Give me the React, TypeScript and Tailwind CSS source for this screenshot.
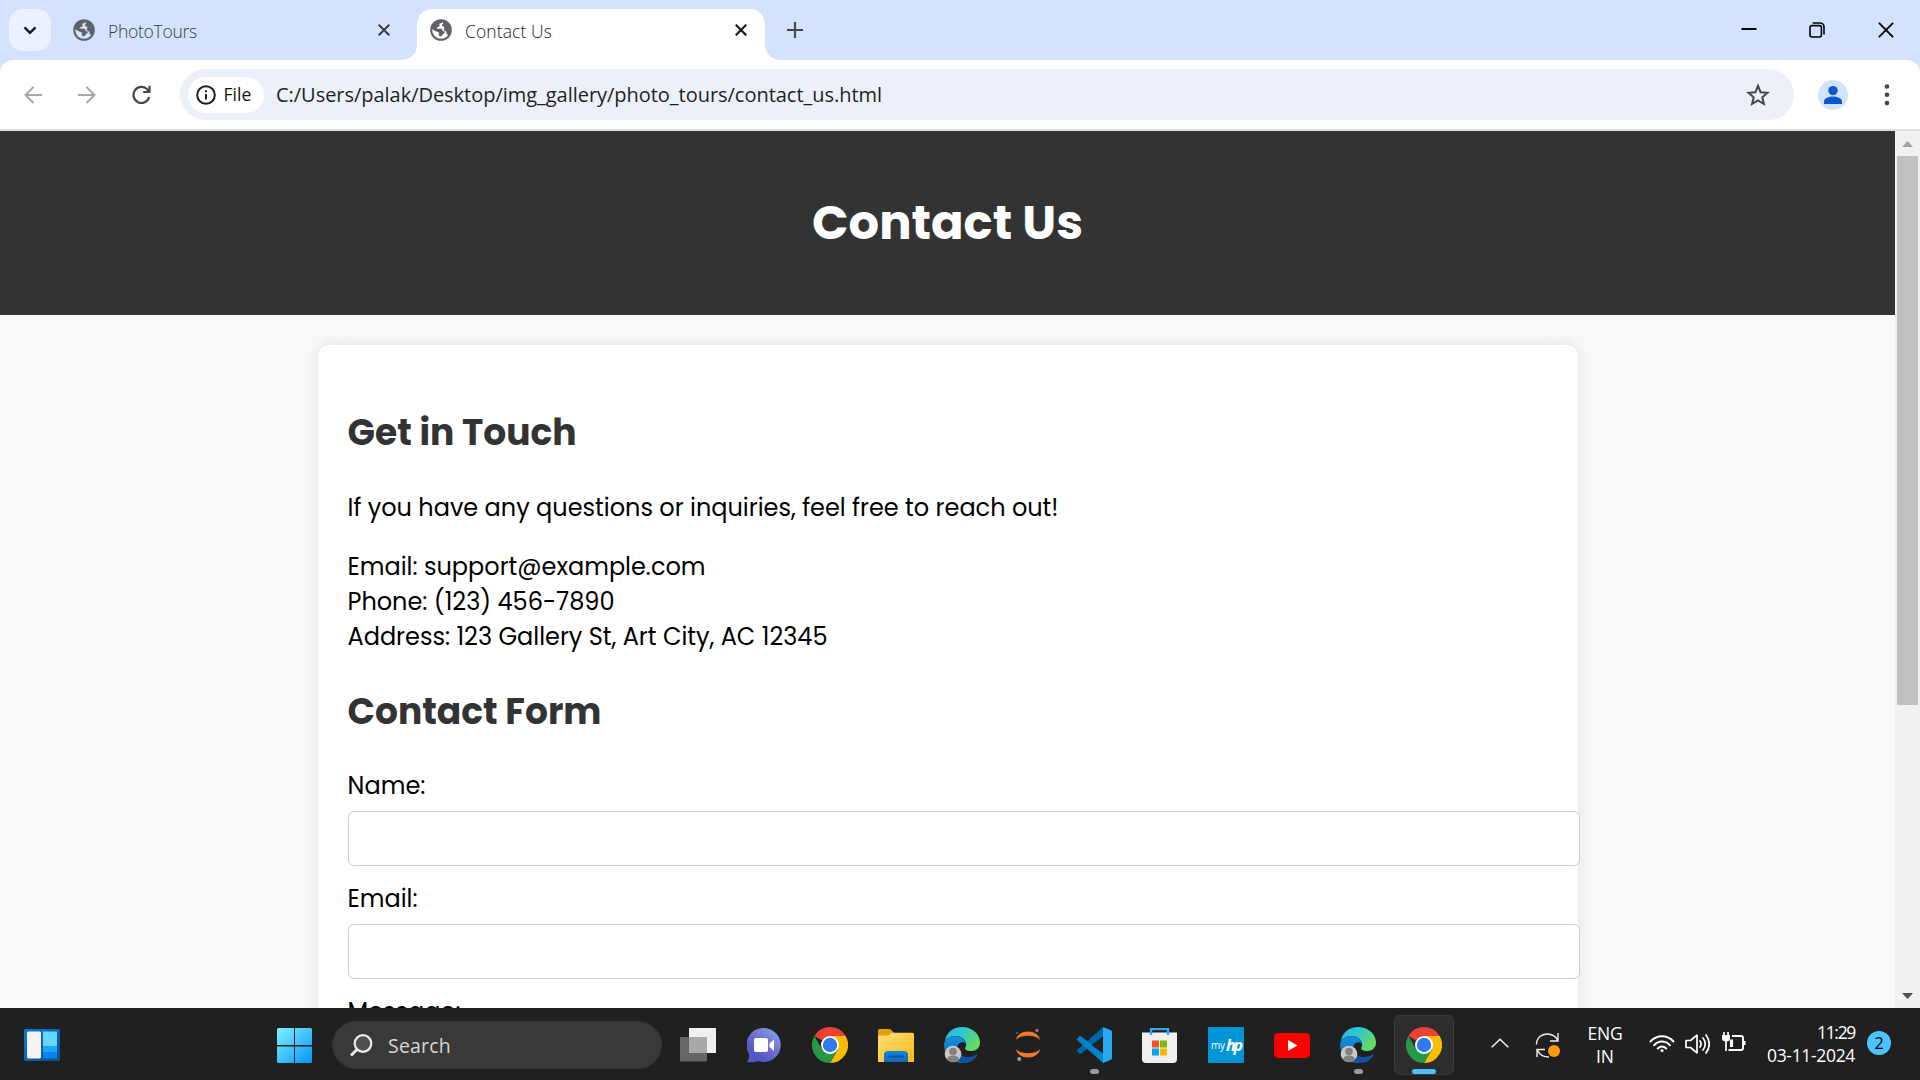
import { useLayoutEffect, useRef, useState, type ReactNode } from "react";

const UI = "font-['Segoe_UI','Open_Sans',sans-serif]";
const PAGE = "font-['Poppins','Inter',sans-serif]";

/** Single-line text whose tracking is adjusted so that it spans the given width. */
function Fit({ w, children, className = "" }: { w: number; children: string; className?: string }) {
  const ref = useRef<HTMLSpanElement>(null);
  const [spacing, setSpacing] = useState(0);
  useLayoutEffect(() => {
    if (!ref.current) return;
    ref.current.style.letterSpacing = "0px";
    const natural = ref.current.getBoundingClientRect().width;
    const next = (w - natural) / children.length;
    ref.current.style.letterSpacing = `${next}px`;
    setSpacing(next);
  }, [w, children]);
  return (
    <span ref={ref} className={`inline-block whitespace-nowrap ${className}`} style={{ letterSpacing: spacing }}>
      {children}
    </span>
  );
}

function Globe() {
  return (
    <svg width="22" height="22" viewBox="0 0 22 22" className="shrink-0">
      <circle cx="11" cy="11" r="9.8" fill="none" stroke="#5f6368" strokeWidth="2" />
      <path
        d="M1.5 9.5C2.5 4.5 6.5 1.2 11.3 1.2l1.7.3-.6 2.3c-1 .7-2.6.3-3 1.3-.3.9.7 1.7-.1 2.4-.8.6-2.1.2-2.5 1.1-.2.8.6 1.2 1.6 1.2h2.8c1.1 0 1.4 1.2 1.5 2.2.8.3 1.9.1 2.1 1.1.2 1-.9 1.5-1.7 1.9-.8.5-.6 1.6-1.5 2.1-1 .5-2.5.1-2.7-1-.2-1.2.2-2.3-.8-3-1.1-.6-2.5-.7-3.600-1.3z"
        fill="#5f6368"
      />
      <path
        d="M13 1.5c4.5.9 7.6 4.9 7.6 9.500 0 2.400-.8 4.600-2.200 6.300-.1-1-.7-1.600-1.500-2-.7-.5-.2-1.900-.7-2.700-.6-.9-2-.7-2.300-1.700-.3-1.100.7-2 .2-3-.4-.8-1.800-.4-2.100-1.300-.3-.9.8-1.300 1-2.200z"
        fill="#5f6368"
      />
    </svg>
  );
}

function Cross({ color, size = 12, sw = 2 }: { color: string; size?: number; sw?: number }) {
  return (
    <svg width={size} height={size} viewBox="0 0 12 12" fill="none" stroke={color} strokeWidth={sw}>
      <path d="M.7.7 11.300 11.300M11.300.7.7 11.300" />
    </svg>
  );
}

function TabStrip() {
  return (
    <div className={`flex h-[60px] shrink-0 bg-[#d3e3fd] ${UI} text-[17.500px] font-[350]`}>
      <div className="mt-[9px] ml-[9px] flex h-[42px] w-[42px] items-center justify-center rounded-[14px] bg-[#ebf1fe]">
        <svg width="14" height="9" viewBox="0 0 14 9" fill="none" stroke="#1b1b1b" strokeWidth="2.500">
          <path d="m1.500 1.300 5.500 5.500 5.500-5.500" />
        </svg>
      </div>
      <div className="flex h-[60px] w-[366px] items-center pl-[22px]">
        <Globe />
        <Fit w={89} className="mt-[3px] ml-[13px] text-[#3a3d40]">PhotoTours</Fit>
        <span className="ml-auto pr-[27px]"><Cross color="#3c3f42" /></span>
      </div>
      <div className="relative mt-[9px] flex h-[51px] w-[348px] items-center rounded-t-[15px] bg-white pl-[13px]">
        <svg className="absolute bottom-0 -left-[15px]" width="15" height="15"><path d="M15 0v15H0A15 15 0 0 0 15 0z" fill="#fff" /></svg>
        <svg className="absolute -right-[15px] bottom-0" width="15" height="15"><path d="M0 0v15h15A15 15 0 0 1 0 0z" fill="#fff" /></svg>
        <span className="-mt-[9px]"><Globe /></span>
        <Fit w={87} className="-mt-[6px] ml-[13px] text-[#1a1a1a]">Contact Us</Fit>
        <span className="-mt-[9px] ml-auto pr-[18px]"><Cross color="#1b1b1b" sw={2.2} /></span>
      </div>
      <svg className="mt-[22px] ml-[22px]" width="16" height="16" viewBox="0 0 16 16" stroke="#474747" strokeWidth="2.2">
        <path d="M8 0v16M0 8h16" />
      </svg>
      <div className="ml-auto flex items-start pt-[22px] pr-[26.500px]">
        <svg width="16" height="16" className="mr-[52px]"><path d="M.5 7h15" stroke="#000" strokeWidth="2" /></svg>
        <svg width="16" height="16" viewBox="0 0 16 16" className="mr-[53px]" fill="none" stroke="#000" strokeWidth="1.600">
          <rect x="1" y="3.600" width="11.400" height="11.400" rx="2" />
          <path d="M3.600 1h7.400a4 4 0 0 1 4 4v7.400" />
        </svg>
        <Cross color="#000" size={16} sw={1.4} />
      </div>
    </div>
  );
}

function Toolbar() {
  return (
    <div className="shrink-0 bg-[#d3e3fd]">
      <div className={`flex h-[69px] items-center rounded-t-[13px] bg-white ${UI}`}>
        <svg className="ml-[24px]" width="18" height="18" viewBox="0 0 18 18" fill="none" stroke="#a6a7a8" strokeWidth="2">
          <path d="M18 9H1.500M9.500 1 1.500 9l8 8" />
        </svg>
        <svg className="ml-[36px]" width="18" height="18" viewBox="0 0 18 18" fill="none" stroke="#a6a7a8" strokeWidth="2">
          <path d="M0 9h16.500M8.500 1l8 8-8 8" />
        </svg>
        <svg className="ml-[35.500px]" width="19" height="20" viewBox="0 0 19 20" fill="none" stroke="#474747" strokeWidth="2.200">
          <path d="M17.200 12A8 8 0 1 1 15.400 4.600L17 6.400" />
          <path d="M17.500.8V7H11.200" />
        </svg>
        <div className="ml-[29.500px] flex h-[51px] w-[1614px] items-center rounded-full bg-[#ecf0f9] pl-[8px]">
          <div className="flex h-[36px] w-[76px] items-center rounded-full bg-white pl-[7.500px]">
            <svg width="20" height="20" viewBox="0 0 20 20" fill="none" stroke="#1f1f1f" strokeWidth="2">
              <circle cx="10" cy="10" r="8.800" />
              <path d="M10 9v5.500M10 5.300v2" />
            </svg>
            <Fit w={28} className="ml-[8px] text-[17.500px] font-medium text-[#111]">File</Fit>
          </div>
          <Fit w={606} className="ml-[12px] text-[20px] text-[#1f1f1f]">
            C:/Users/palak/Desktop/img_gallery/photo_tours/contact_us.html
          </Fit>
          <svg className="mr-[24px] ml-auto" width="24" height="24" viewBox="0 0 24 24" fill="none" stroke="#474747" strokeWidth="2">
            <path d="m12 2.800 2.600 6.400 7 .6-5.300 4.500 1.600 6.700-5.900-3.600L6.100 21l1.600-6.700L2.400 9.800l7-.6z" />
          </svg>
        </div>
        <svg className="ml-[24px]" width="30" height="30" viewBox="0 0 30 30">
          <circle cx="15" cy="15" r="15" fill="#d3e3fd" />
          <circle cx="15" cy="10.600" r="4.700" fill="#0b57d0" />
          <path d="M6 24v-2.500c0-3.200 5-5 9-5s9 1.800 9 5V24z" fill="#0b57d0" />
        </svg>
        <svg className="ml-[36px]" width="6" height="22" fill="#474747">
          <circle cx="3" cy="2.500" r="2.300" /><circle cx="3" cy="10.800" r="2.300" /><circle cx="3" cy="19.100" r="2.300" />
        </svg>
      </div>
      <div className="h-[2px] bg-[#dedfe1]" />
    </div>
  );
}

function Field({ label, w }: { label: string; w: number }) {
  return (
    <div className="mb-[14px] h-[99px]">
      <label className="block h-[35px] leading-[35px]"><Fit w={w}>{label}</Fit></label>
      <input className="mt-[8px] block h-[55px] w-[1232px] rounded-[6px] border border-[#ccc] bg-white" />
    </div>
  );
}

function ContactPage() {
  return (
    <div className={`flex h-[877px] shrink-0 overflow-hidden bg-[#f9f9f9] ${PAGE}`}>
      <div className="h-[877px] w-[1895px] overflow-hidden">
        <header className="h-[184px] bg-[#333] pt-[56px] text-center text-[48px] leading-[72px] font-bold text-white">
          <h1><Fit w={271}>Contact Us</Fit></h1>
        </header>
        <main className="mx-auto mt-[30px] h-[1100px] w-[1260px] rounded-[12px] bg-white px-[30px] pt-[61px] text-[24px] leading-[35px] text-black shadow-[0_0_15px_rgba(0,0,0,0.1)]">
          <h2 className="text-[36px] leading-[54px] font-bold text-[#333]"><Fit w={229}>Get in Touch</Fit></h2>
          <p className="mt-[30px] h-[35px]"><Fit w={711}>If you have any questions or inquiries, feel free to reach out!</Fit></p>
          <address className="mt-[24px] flex flex-col items-start not-italic">
            <Fit w={358}>Email: support@example.com</Fit>
            <Fit w={267}>Phone: (123) 456-7890</Fit>
            <Fit w={480}>Address: 123 Gallery St, Art City, AC 12345</Fit>
          </address>
          <h2 className="mt-[31px] text-[36px] leading-[54px] font-bold text-[#333]"><Fit w={254}>Contact Form</Fit></h2>
          <form className="mt-[29px]">
            <Field label="Name:" w={78} />
            <Field label="Email:" w={70} />
            <label className="block h-[35px]"><Fit w={113}>Message:</Fit></label>
          </form>
        </main>
      </div>
      <div className="flex h-[877px] w-[25px] flex-col items-center bg-[#f1f1f1]">
        <svg className="mt-[10px] shrink-0" width="11" height="6"><path d="M5.500 0 11 6H0z" fill="#a3a3a3" /></svg>
        <div className="mt-[9px] h-[549px] w-[21px] bg-[#c1c1c1]" />
        <svg className="mt-auto mb-[9px] shrink-0" width="11" height="6"><path d="M5.500 6 11 0H0z" fill="#505050" /></svg>
      </div>
    </div>
  );
}

function Chrome() {
  return (
    <svg width="36" height="36" viewBox="0 0 36 36">
      <path d="M18 18 2.400 9A18 18 0 0 1 33.600 9z" fill="#ea4335" />
      <path d="M18 9h15.600A18 18 0 0 1 18 36l7.800-13.500z" fill="#fbbc05" />
      <path d="M2.400 9A18 18 0 0 0 18 36l7.800-13.500L18 18l-7.800 4.500z" fill="#279847" />
      <circle cx="18" cy="18" r="9" fill="#fff" />
      <circle cx="18" cy="18" r="7.200" fill="#2f7bee" />
    </svg>
  );
}

function Edge() {
  return (
    <svg width="36" height="36" viewBox="0 0 36 36">
      <defs>
        <linearGradient id="edgeTop" x1="0" y1="0" x2="1" y2=".5">
          <stop offset="0" stopColor="#28b4ee" /><stop offset=".5" stopColor="#32c6cf" /><stop offset="1" stopColor="#62dd63" />
        </linearGradient>
        <linearGradient id="edgeBody" x1="0" y1="0" x2="0" y2="1">
          <stop offset="0" stopColor="#1391df" /><stop offset="1" stopColor="#0966b8" />
        </linearGradient>
      </defs>
      <path d="M1 14C2 6 9 0 18 0c10 0 18 7 18 15.500C36 21 32 24 27.500 24c-4.500 0-6.800-1.500-6.300-3 .3-1 1-1.600 1-3.500C22 12 16 8.500 10.500 9 6 9.400 2.500 11.500 1 14z" fill="url(#edgeTop)" />
      <path d="M0 18C0 13 5 9 10.500 9c6 0 11 3.500 11.700 8-1.500-2-5.500-2.500-7.500 0C10 23 15 34 24 35 10 39 0 29 0 18z" fill="url(#edgeBody)" />
      <path d="M14.700 17c-3 4-.7 10.500 5.300 12.500 5 1.500 9.500-.3 12.300-2 .8-.4 1.600.2 1.100 1C30.500 33.500 26 36 20.500 36 12 35 9.500 22 14.700 17z" fill="#114f9f" />
      <circle cx="9" cy="27" r="8.300" fill="#c9c8c6" />
      <circle cx="9" cy="24.500" r="3.800" fill="#84827f" />
      <path d="M3 32.500c.5-3 2.500-4 6-4s5.500 1 6 4A8.300 8.300 0 0 1 3 32.500z" fill="#84827f" />
    </svg>
  );
}

function TaskItem({ children, mark }: { children: ReactNode; mark?: "open" | "active" }) {
  return (
    <div className={`relative mx-[3px] flex h-[60px] w-[60px] items-center justify-center rounded-[6px] ${mark === "active" ? "border border-[#3a3a3a] bg-[#2d2d2d]" : ""}`}>
      {children}
      {mark === "open" && <span className="absolute bottom-[1px] h-[5px] w-[9px] rounded-full bg-[#9a9a9a]" />}
      {mark === "active" && <span className="absolute bottom-0 h-[5px] w-[24px] rounded-full bg-[#4cc2ff]" />}
    </div>
  );
}

function Taskbar() {
  return (
    <div className={`flex h-[72px] shrink-0 items-center bg-[#202020] pt-[2px] ${UI} text-white`}>
      <svg className="ml-[24px]" width="36" height="32" viewBox="0 0 36 32">
        <defs>
          <linearGradient id="wdg" x1="0" y1="0" x2="1" y2="1"><stop stopColor="#0c7cd6" /><stop offset="1" stopColor="#0c4a8c" /></linearGradient>
        </defs>
        <rect width="36" height="32" rx="1.500" fill="url(#wdg)" />
        <rect x="3" y="2.500" width="14" height="27" rx="1.500" fill="#f4f4f4" />
        <path d="M19 2.500h14v15H19z" fill="#66d6ff" /><path d="M19 17.500h14v5.500H19z" fill="#1aa5ff" /><path d="M19 23h14v6.500H19z" fill="#0a84ea" />
      </svg>
      <svg className="ml-[217px]" width="35" height="35" viewBox="0 0 35 35">
        <defs>
          <linearGradient id="win" gradientUnits="userSpaceOnUse" x1="0" y1="0" x2="35" y2="35"><stop stopColor="#7df3ff" /><stop offset="1" stopColor="#0894fb" /></linearGradient>
        </defs>
        <path d="M1.500 0H17v17H0V1.500Q0 0 1.500 0zM18 0h15.500Q35 0 35 1.500V17H18zM0 18.500h17V35H1.500Q0 35 0 33.500zM18 18.500h17v15q0 1.500-1.500 1.500H18z" fill="url(#win)" />
      </svg>
      <div className="ml-[20px] flex h-[48px] w-[330px] items-center rounded-full border border-[#343434] bg-[#393939] pl-[17px]">
        <svg width="23" height="23" viewBox="0 0 23 23" fill="none" stroke="#ececec" strokeWidth="2.200">
          <circle cx="13" cy="9.500" r="8.300" fill="#505050" />
          <path d="m7 15.500-6 6" strokeWidth="2.800" />
        </svg>
        <Fit w={63} className="mt-[2px] ml-[15px] text-[19.500px] text-[#d6d6d6]">Search</Fit>
      </div>
      <div className="ml-[3px] flex items-center">
        <TaskItem>
          <svg width="36" height="34" viewBox="0 0 36 34">
            <path d="M9 0h27v25H9z" fill="#efefef" />
            <path d="M0 9h27v24.500H0z" fill="#666" />
            <path d="M9 9h18v16H9z" fill="#a8a8a8" />
          </svg>
        </TaskItem>
        <TaskItem>
          <svg width="34" height="35" viewBox="0 0 34 35">
            <defs>
              <linearGradient id="chat" x1="0" y1="1" x2=".8" y2="0"><stop offset=".3" stopColor="#5458c4" /><stop offset=".7" stopColor="#7b78d2" /><stop offset="1" stopColor="#7aa7ee" /></linearGradient>
            </defs>
            <path d="M17 0a17 17 0 1 1-6 33c-3 1.200-7 1.500-11 1 1.500-2 2.300-5 2-8A17 17 0 0 1 17 0z" fill="url(#chat)" />
            <rect x="7" y="10" width="14" height="14" rx="2" fill="#fff" />
            <path d="m22.500 15.500 4.500-4v11.500l-4.500-4z" fill="#fff" />
          </svg>
        </TaskItem>
        <TaskItem><Chrome /></TaskItem>
        <TaskItem>
          <svg width="36" height="33" viewBox="0 0 36 33">
            <defs>
              <linearGradient id="fold" x1="0" y1="0" x2="1" y2="1"><stop stopColor="#ffdf7b" /><stop offset="1" stopColor="#fbb917" /></linearGradient>
              <linearGradient id="pocket" x1="0" y1="0" x2="0" y2="1"><stop stopColor="#0b86dc" /><stop offset="1" stopColor="#0a6bbd" /></linearGradient>
            </defs>
            <path d="M0 1.500Q0 0 1.500 0h10q1 0 1.800 1l2.700 3H34v8H0z" fill="#e3a008" />
            <path d="M0 6.500h9.500q1 0 1.800-.8l2.400-2h20.800q1.500 0 1.500 1.500V33H0z" fill="url(#fold)" />
            <path d="M6 33v-7q0-4 4-4h16q4 0 4 4v7z" fill="url(#pocket)" />
            <path d="M11 27.500h14" stroke="#0a4c8e" strokeWidth="2" strokeLinecap="round" />
          </svg>
        </TaskItem>
        <TaskItem><Edge /></TaskItem>
        <TaskItem>
          <svg width="26" height="34" viewBox="0 0 26 34">
            <path d="M1 12C2 6.500 7 3.500 13 3.500S24 6.500 25 12C22.500 9 18 7.800 13 7.800S3.500 9 1 12z" fill="#f37726" />
            <path d="M1 21c1 5.500 6 8.500 12 8.500S24 26.500 25 21c-2.500 3-7 4.200-12 4.200S3.500 24 1 21z" fill="#f37726" />
            <circle cx="22" cy="2.500" r="1.700" fill="#7c7c7c" /><circle cx="4.200" cy="31" r="2" fill="#9a9a9a" /><circle cx="2" cy="5" r="1.100" fill="#616161" />
          </svg>
        </TaskItem>
        <TaskItem mark="open">
          <svg width="36" height="36" viewBox="0 0 36 36">
            <path d="M.6 23.500 3 26.500q1 .8 2.200 0L27 10V0z" fill="#0065a9" />
            <path d="M.6 12.500 3 9.500q1-.8 2.200 0L27 26v10z" fill="#0084c8" />
            <path d="M27 0l8 3.300q1 .5 1 1.700v26q0 1.200-1 1.700L27 36z" fill="#28a8f0" />
            <path d="M27 9.500 15.500 18 27 26.500z" fill="#202020" />
          </svg>
        </TaskItem>
        <TaskItem>
          <svg className="-ml-[1px]" width="35" height="35" viewBox="0 0 35 35">
            <path d="M0 4.500h35V31q0 4-4 4H4q-4 0-4-4z" fill="#f0f0f0" />
            <path d="M9 7V1h17v6" fill="none" stroke="#2fa8ee" strokeWidth="2.400" />
            <path d="M10 12.500h7v7h-7z" fill="#f25022" /><path d="M18 12.500h7v7h-7z" fill="#7fba00" />
            <path d="M10 20.500h7v7h-7z" fill="#00a4ef" /><path d="M18 20.500h7v7h-7z" fill="#ffb900" />
          </svg>
        </TaskItem>
        <TaskItem>
          <div className="flex h-[36px] w-[36px] items-center justify-center gap-px rounded-[1px] bg-[#0096d6] leading-[36px] text-white">
            <Fit w={14} className="text-[10px]">my</Fit>
            <Fit w={15} className="text-[16px] font-bold italic">hp</Fit>
          </div>
        </TaskItem>
        <TaskItem>
          <svg width="36" height="25" viewBox="0 0 36 25">
            <rect width="36" height="25" rx="4.500" fill="#f00" />
            <path d="m14 7 9.500 5.500L14 18z" fill="#fff" />
          </svg>
        </TaskItem>
        <TaskItem mark="open"><Edge /></TaskItem>
        <TaskItem mark="active"><Chrome /></TaskItem>
      </div>
      <svg className="ml-[34px] -mt-[4px]" width="18" height="10" fill="none" stroke="#f2f2f2" strokeWidth="1.500"><path d="m.7 9.300 8.300-8 8.300 8" /></svg>
      <svg className="ml-[26px]" width="26" height="26" viewBox="0 0 26 26" fill="none" stroke="#eee" strokeWidth="1.400">
        <path d="M1.500 12.500C1.500 6 6.500 2 12 2c5 0 9 2.500 10.800 6.500M23 1v8h-8" />
        <path d="M2 25v-7.500h8M2.500 18C4.500 23 9 25 14 25" />
        <circle cx="19" cy="19" r="6" fill="#ff9a0a" stroke="none" />
      </svg>
      <div className="ml-[26px] flex w-[36px] flex-col items-center text-[17.500px] leading-[23px]">
        <Fit w={35}>ENG</Fit>
        <Fit w={18}>IN</Fit>
      </div>
      <svg className="ml-[26px] -mt-[3px]" width="26" height="18" viewBox="0 0 26 18" fill="none" stroke="#fff" strokeWidth="1.900" strokeLinecap="round">
        <path d="M1.500 6.500c6.500-7 16.500-7 23 0M5 10.300c4.500-5 11.500-5 16 0M8.700 13.500c2.500-2.700 6.100-2.700 8.600 0" />
        <circle cx="13" cy="15.500" r="1.600" fill="#fff" stroke="none" />
      </svg>
      <svg className="ml-[10px] -mt-[2px]" width="25" height="20" viewBox="0 0 25 20" fill="none" stroke="#fff" strokeWidth="1.700" strokeLinecap="round" strokeLinejoin="round">
        <path d="M1 6.500h4.500L12 1.200v17.600l-6.500-5.300H1z" />
        <path d="M15 7c1.300 1.800 1.300 4.200 0 6M18 4c2.900 3.500 2.900 8.500 0 12M21 1c4.300 5.300 4.300 12.700 0 18" />
      </svg>
      <svg className="ml-[11px] -mt-[6px]" width="26" height="20" viewBox="0 0 26 20" fill="none" stroke="#fff" strokeWidth="1.900">
        <path d="M11 4h9q2 0 2 2v10q0 2-2 2H7.500" strokeLinejoin="round" />
        <path d="M23 9v4" strokeWidth="3.200" />
        <path d="M3 0v4M7 0v4M5 8v11" strokeWidth="1.700" />
        <path d="M1 3h8v3.500Q9 9.500 5 9.500T1 6.500z" fill="#fff" stroke="none" />
        <path d="M10.500 7.500v7.500" strokeWidth="3.200" />
      </svg>
      <div className="-mt-[2px] ml-[20px] flex w-[88px] flex-col items-end text-[17.500px] leading-[23px]">
        <Fit w={38}>11:29</Fit>
        <Fit w={88}>03-11-2024</Fit>
      </div>
      <div className="-mt-[4px] ml-[12px] flex h-[24px] w-[24px] items-center justify-center rounded-full bg-[#4cc2ff] text-[16px] leading-[24px] text-black">2</div>
    </div>
  );
}

export default function App() {
  return (
    <div className="flex h-[1080px] w-[1920px] flex-col overflow-hidden bg-white">
      <TabStrip />
      <Toolbar />
      <ContactPage />
      <Taskbar />
    </div>
  );
}
